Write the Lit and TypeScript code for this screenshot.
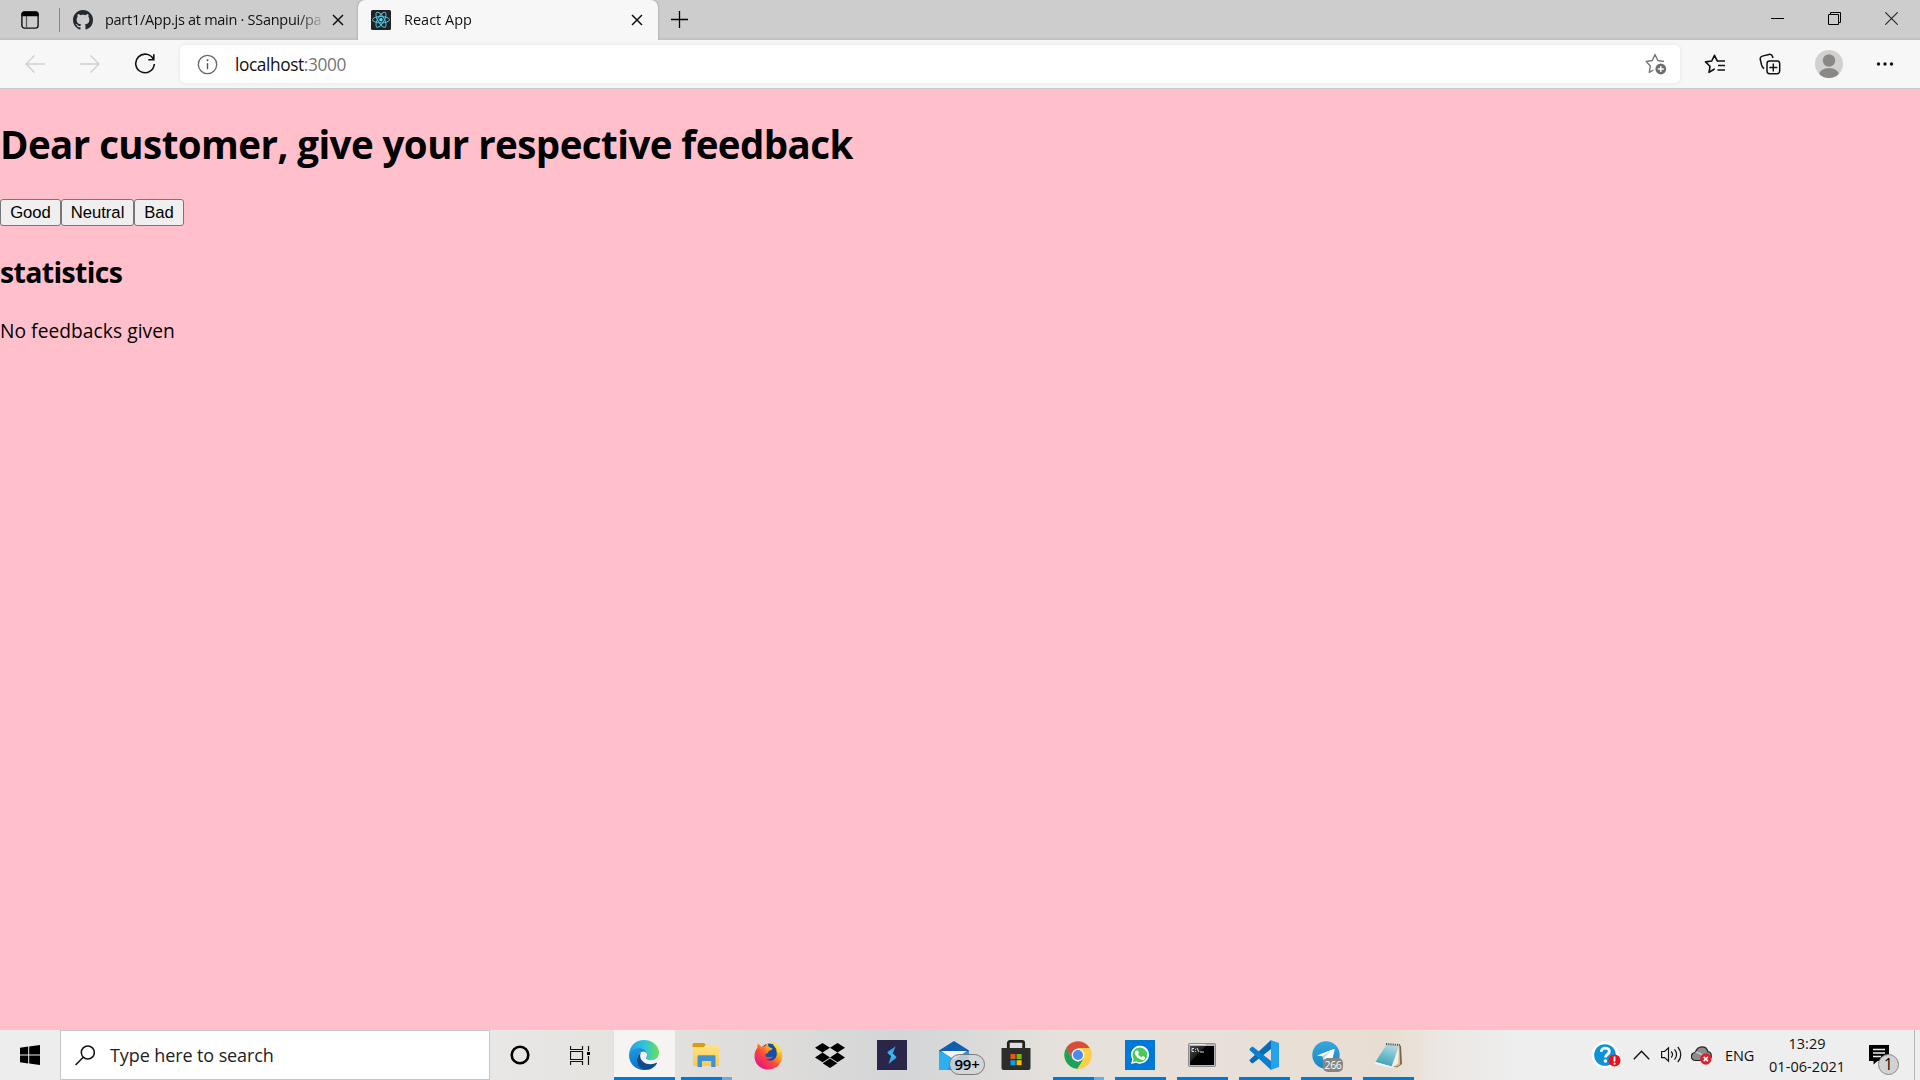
import { LitElement, html, css, svg } from "lit";
import type { TemplateResult } from "lit";
import { customElement, property, state } from "lit/decorators.js";
import { classMap } from "lit/directives/class-map.js";

const icon = (w: number, h: number, body: TemplateResult) =>
  html`<svg width=${w} height=${h} viewBox="0 0 ${w} ${h}" fill="none" style="display:block;flex:none">${body}</svg>`;

const closeIcon = icon(12, 12, svg`<path d="M1 1L11 11M11 1L1 11" stroke="#111" stroke-width="1.5"/>`);

const githubIcon = html`<svg width="20" height="20" viewBox="0 0 16 16" fill="#24292e" style="display:block;flex:none"><path d="M8 0C3.58 0 0 3.58 0 8c0 3.54 2.29 6.53 5.47 7.59.4.07.55-.17.55-.38 0-.19-.01-.82-.01-1.49-2.01.37-2.53-.49-2.69-.94-.09-.23-.48-.94-.82-1.13-.28-.15-.68-.52-.01-.53.63-.01 1.08.58 1.23.82.72 1.21 1.87.87 2.33.66.07-.52.28-.87.51-1.07-1.78-.2-3.64-.89-3.64-3.95 0-.87.31-1.59.82-2.15-.08-.2-.36-1.02.08-2.12 0 0 .67-.21 2.2.82.64-.18 1.32-.27 2-.27s1.36.09 2 .27c1.53-1.04 2.2-.82 2.2-.82.44 1.1.16 1.92.08 2.12.51.56.82 1.27.82 2.15 0 3.07-1.87 3.75-3.65 3.95.29.25.54.73.54 1.48 0 1.07-.01 1.93-.01 2.2 0 .21.15.46.55.38A8.01 8.01 0 0 0 16 8c0-4.42-3.58-8-8-8z"/></svg>`;

const reactIcon = icon(20, 20, svg`
  <rect width="20" height="20" rx="1.5" fill="#222"/>
  <g stroke="#53c1de" stroke-width="1">
    <ellipse cx="10" cy="9.7" rx="8.5" ry="3.2"/>
    <ellipse cx="10" cy="9.7" rx="8.5" ry="3.2" transform="rotate(60 10 9.7)"/>
    <ellipse cx="10" cy="9.7" rx="8.5" ry="3.2" transform="rotate(120 10 9.7)"/>
  </g>
  <circle cx="10" cy="9.7" r="1.7" fill="#61dafb"/>`);

const tabActionsIcon = icon(18, 18, svg`
  <rect x="0.9" y="0.9" width="16.2" height="16.2" rx="2.6" stroke="#111" stroke-width="1.4"/>
  <path d="M.5 5.2V3A2.5 2.5 0 0 1 3 .5h12A2.5 2.5 0 0 1 17.5 3v2.2z" fill="#000"/>
  <path d="M5.5 5v12" stroke="#555" stroke-width="1.2"/>`);

const starPath = "M10.2 15.2L5 18.3 6 12.3 1.5 7.9 7.7 7 10.5 1.3 13.2 6.8";

@customElement("browser-tab")
class BrowserTab extends LitElement {
  @property() label = "";
  @property({ type: Boolean, reflect: true }) active = false;
  @property({ attribute: false }) favicon: TemplateResult | null = null;

  static styles = css`
    :host {
      display: flex;
      align-items: center;
      height: 40px;
      width: 298px;
      box-sizing: border-box;
      padding: 0 14px 0 13px;
      color: #111;
      font: 14.5px "Open Sans", "Noto Sans", sans-serif;
    }
    :host([active]) {
      width: 300px;
      background: #f7f7f7;
      border-radius: 7px 7px 0 0;
      box-shadow: 0 0 2px rgba(0, 0, 0, 0.35);
      padding-right: 15px;
    }
    .label {
      flex: 1;
      min-width: 0;
      margin: 0 10px 0 12px;
      overflow: hidden;
      white-space: nowrap;
      line-height: 40px;
      letter-spacing: -0.28px;
      -webkit-mask-image: linear-gradient(to right, #000 calc(100% - 24px), transparent calc(100% + 4px));
      mask-image: linear-gradient(to right, #000 calc(100% - 24px), transparent calc(100% + 4px));
    }
    :host([active]) .label {
      margin-left: 13px;
      letter-spacing: 0;
    }
  `;

  render() {
    return html`${this.favicon}<span class="label">${this.label}</span>${closeIcon}`;
  }
}

@customElement("browser-chrome")
class BrowserChrome extends LitElement {
  static styles = css`
    :host {
      display: flex;
      flex-direction: column;
      font-family: "Open Sans", "Noto Sans", sans-serif;
    }
    .strip {
      display: flex;
      align-items: center;
      height: 40px;
      background: linear-gradient(#cdcdcd 37px, #bdbdbd);
    }
    .actions {
      display: flex;
      align-items: center;
      width: 60px;
      height: 24px;
      box-sizing: border-box;
      padding-left: 21px;
      border-right: 1px solid #888;
    }
    .plus {
      padding: 0 0 1px 13px;
      flex: 1;
    }
    .window {
      display: flex;
      gap: 44px;
      padding: 0 22px 3px 0;
    }
    .toolbar {
      display: flex;
      align-items: center;
      height: 49px;
      box-sizing: border-box;
      background: #f7f7f7;
      padding: 0 26px 0 24px;
      border-bottom: 1px solid #ccc;
    }
    .nav {
      display: flex;
      align-items: center;
      width: 156px;
      gap: 33px;
    }
    .address {
      display: flex;
      align-items: center;
      width: 1500px;
      height: 38px;
      box-sizing: border-box;
      padding: 0 13px 0 17px;
      background: #fff;
      border-radius: 5px;
      box-shadow: 0 0 4px rgba(0, 0, 0, 0.09);
    }
    .url {
      flex: 1;
      padding-left: 17px;
      font-size: 17.3px;
      letter-spacing: -0.4px;
      color: #111;
      white-space: nowrap;
    }
    .port {
      color: #767676;
    }
    .tools {
      display: flex;
      align-items: center;
      flex: 1;
      justify-content: space-between;
      padding-left: 24px;
    }
  `;

  render() {
    return html`
      <div class="strip">
        <div class="actions">${tabActionsIcon}</div>
        <browser-tab .favicon=${githubIcon} label="part1/App.js at main · SSanpui/pa"></browser-tab>
        <browser-tab active .favicon=${reactIcon} label="React App"></browser-tab>
        <div class="plus">${icon(17, 17, svg`<path d="M8.5 0v17M0 8.5h17" stroke="#000" stroke-width="1.3"/>`)}</div>
        <div class="window">
          ${icon(13, 13, svg`<path d="M0 6.5h13" stroke="#000"/>`)}
          ${icon(13, 13, svg`<path d="M.5 2.5h10v10H.5zM2.5 2.5v-2h10v10h-2" stroke="#000"/>`)}
          ${icon(13, 13, svg`<path d="M.3.3l12.4 12.4M12.7.3L.3 12.7" stroke="#222" stroke-width="1.1"/>`)}
        </div>
      </div>
      <div class="toolbar">
        <div class="nav">
          ${icon(22, 20, svg`<path d="M21 10H2M10.5 1.5L2 10l8.5 8.5" stroke="#cfcfcf" stroke-width="1.4"/>`)}
          ${icon(22, 20, svg`<path d="M1 10h19M11.5 1.5L20 10l-8.5 8.5" stroke="#cfcfcf" stroke-width="1.4"/>`)}
          ${icon(22, 22, svg`<path d="M19.5 6.6A9.3 9.3 0 1 0 20.3 11M19.8 1.3v5.5h-5.5" stroke="#111" stroke-width="1.6"/>`)}
        </div>
        <div class="address">
          ${icon(21, 21, svg`<circle cx="10.5" cy="10.5" r="9.2" stroke="#666" stroke-width="1.3"/><path d="M10.5 9.2v6" stroke="#555" stroke-width="1.4"/><circle cx="10.5" cy="6.2" r="1" fill="#555"/>`)}
          <div class="url">localhost<span class="port">:3000</span></div>
          ${icon(22, 22, svg`
            <path d="M8.5 17L4.3 19.3 5.3 12.9 1.2 8.5 7.3 7.5 10 1.5 12.8 7.5 19 8.5" stroke="#777" stroke-width="1.4" stroke-linejoin="round"/>
            <circle cx="15.8" cy="16" r="5.4" fill="#6e6e6e"/><path d="M15.8 13v6M12.8 16h6" stroke="#fff" stroke-width="1.4"/>`)}
        </div>
        <div class="tools">
          ${icon(22, 21, svg`<path d=${starPath} stroke="#111" stroke-width="1.6" stroke-linejoin="round" stroke-linecap="round"/><path d="M13 7h8M14 11.5h7M13.5 16h7.5" stroke="#111" stroke-width="1.5"/>`)}
          ${icon(22, 22, svg`
            <rect x="8" y="8" width="12.7" height="12.7" rx="2.6" stroke="#111" stroke-width="1.5"/>
            <path d="M14.3 10.5v8M10.3 14.5h8" stroke="#111" stroke-width="1.4"/>
            <path d="M5.2 15.5C3.5 14.8 3 13.5 2.6 12L1.3 6.5C.9 4.8 1.6 3.6 3.3 3.1L10 1.4c1.9-.4 2.9.3 3.5 2l.4 1.6" stroke="#111" stroke-width="1.5"/>`)}
          <svg width="28" height="28" viewBox="0 0 28 28">
            <defs><clipPath id="face"><circle cx="14" cy="14" r="14"/></clipPath></defs>
            <g clip-path="url(#face)"><rect width="28" height="28" fill="#d2d0ce"/><circle cx="14" cy="10.5" r="6.2" fill="#8a8886"/><ellipse cx="14" cy="25" rx="10" ry="7" fill="#8a8886"/></g>
          </svg>
          ${icon(18, 6, svg`<g fill="#111"><circle cx="2.5" cy="3" r="1.7"/><circle cx="9" cy="3" r="1.7"/><circle cx="15.5" cy="3" r="1.7"/></g>`)}
        </div>
      </div>
    `;
  }
}

@customElement("feedback-page")
class FeedbackPage extends LitElement {
  @state() private good = 0;
  @state() private neutral = 0;
  @state() private bad = 0;

  static styles = css`
    :host {
      display: block;
      background: #ffc0cb;
      color: #000;
      font: 19.2px/27px "Open Sans", "Noto Sans", sans-serif;
      overflow: hidden;
    }
    h1 {
      margin: 29px 0 28px;
      font-size: 38.5px;
      line-height: 53px;
      letter-spacing: -0.57px;
      white-space: nowrap;
    }
    .buttons {
      display: flex;
    }
    button {
      height: 27px;
      box-sizing: border-box;
      border: 1px solid #767676;
      border-radius: 3px;
      background: #efefef;
      color: #000;
      padding: 0;
      font: 16.67px "Liberation Sans", Arial, sans-serif;
    }
    .good { width: 61px; }
    .neutral { width: 73px; }
    .bad { width: 50px; }
    h2 {
      margin: 26px 0 25px;
      font-size: 28.5px;
      line-height: 40px;
      letter-spacing: -0.65px;
    }
    p {
      margin: 0;
      letter-spacing: 0.05px;
    }
  `;

  render() {
    const total = this.good + this.neutral + this.bad;
    return html`
      <h1>Dear customer, give your respective feedback</h1>
      <div class="buttons">
        <button class="good" @click=${() => this.good++}>Good</button>
        <button class="neutral" @click=${() => this.neutral++}>Neutral</button>
        <button class="bad" @click=${() => this.bad++}>Bad</button>
      </div>
      <h2>statistics</h2>
      ${total === 0
        ? html`<p>No feedbacks given</p>`
        : html`<p>good ${this.good}</p><p>neutral ${this.neutral}</p><p>bad ${this.bad}</p>`}
    `;
  }
}

const edge = icon(30, 30, svg`
  <defs>
    <linearGradient id="e1" x1="0" y1="8" x2="30" y2="8" gradientUnits="userSpaceOnUse"><stop offset="0.1" stop-color="#2aa5e4"/><stop offset=".5" stop-color="#2fc2df"/><stop offset="1" stop-color="#6be05a"/></linearGradient>
    <linearGradient id="e2" x1="0" y1="8" x2="10" y2="30" gradientUnits="userSpaceOnUse"><stop stop-color="#1b9de2"/><stop offset="1" stop-color="#0d6fca"/></linearGradient>
  </defs>
  <path d="M0 14.5C.3 6 6.8 0 15 0c9 0 15 6.3 15 12.5 0 5-3.8 7.7-8 7.7-3.6 0-5.2-1.2-5.2-2.2 0-.8 1.2-1.3 1.2-3.6C18 11 14.5 9 10.5 9 5 9 1 12 0 14.5z" fill="url(#e1)"/>
  <path d="M0 15C.8 10.5 5.5 8.3 10 8.3c4.6 0 8 2.7 8 6.1-.5-2-2-2.9-3.6-2.9-2.8 0-6.2 3.3-6.2 8 0 5 3.8 9.8 10.3 10.2-1.1.2-2.2.3-3.5.3C6.5 30 0 23.5 0 15z" fill="url(#e2)"/>
  <path d="M12.4 12.2c-1 1-1.2 2.6-1.2 3.8 0 4.5 4.5 8.3 10 8.3 2.9 0 4.8-.8 6-1.5.5-.3 1 .2.7.7-2.5 4.1-6.5 6.3-10.6 6.3-5.4 0-9.3-4.5-9.3-9.9 0-3.7 2-6.4 4.4-7.7z" fill="#114a8b"/>`);

const explorer = icon(28, 26, svg`
  <defs><linearGradient id="x1" x1="0" y1="4" x2="0" y2="24" gradientUnits="userSpaceOnUse"><stop stop-color="#ffe083"/><stop offset="1" stop-color="#fcc950"/></linearGradient></defs>
  <path d="M1 3h26v21H1z" fill="url(#x1)"/>
  <path d="M.5 2.500a1.500 1.500 0 0 1 1.500-1.500h10l1.700 1.500-1.700 2.600H.5z" fill="#dd9b12"/>
  <path d="M5.5 25V14.5a1.2 1.2 0 0 1 1.2-1.2h15.6a1.2 1.2 0 0 1 1.2 1.2V25h-4.300v-6H10v6z" fill="#3f93d5"/>`);

const firefox = icon(29, 29, svg`
  <defs><linearGradient id="f1" x1="26" y1="2" x2="5" y2="26" gradientUnits="userSpaceOnUse"><stop stop-color="#fff44f"/><stop offset=".35" stop-color="#ffa41d"/><stop offset=".6" stop-color="#ff4b37"/><stop offset="1" stop-color="#e31587"/></linearGradient></defs>
  <circle cx="15.500" cy="12.500" r="10" fill="#144fa8"/>
  <path d="M3.500 6.500C3.200 4.500 4 2.600 4 2.600 5.500 4 6.800 5.300 7.500 6c1-.7 2.600-.8 3.500-.5.7-1.800 2-3 3-3.500-.3 1.600.2 2.800.7 3.600.5 1 3.700 1.500 3.700 2 0 1.200-1.500 1.600-3 2.200-1.400.6-.6 2-2 2.500-1.500.6-2.400 1-1.800 2.500 1.200 2.500 5 1.600 7.200.5-1.300 2.300-4.500 3.300-7 2.800 3.700 3.300 9.200 1.400 10.700-3.100.8-2.600.1-5-1-6.500 2.200 1 3 2.500 3.200 3.500C25 7 20.500 5 18.500 1.500L18.200.7C22 2.500 25.500 5.500 27 8.500c4 8-1 20-13 20C6 28.500.5 22.500.5 15c0-3.500 1.300-6.500 3-8.500z" fill="url(#f1)"/>
  <path d="M18.200.5c.2 4.200 4.800 6.300 5.800 12l3.500-2C26.500 6.500 22 3.500 18.200.5z" fill="#ffdf34"/>`);

const dropbox = icon(30, 25, svg`<path d="M7.500 0L15 4.800 7.500 9.600 0 4.800zM22.500 0L30 4.800 22.500 9.600 15 4.800zM7.500 9.600l7.500 4.800-7.500 4.800L0 14.400zM22.500 9.600l7.500 4.800-7.500 4.800-7.500-4.800zM15 15.600l7.300 4.700L15 25l-7.300-4.700z" fill="#000"/>`);

const bolt = icon(30, 30, svg`
  <defs><linearGradient id="b1" x1="10" y1="6" x2="20" y2="24" gradientUnits="userSpaceOnUse"><stop stop-color="#3f7ff0"/><stop offset=".5" stop-color="#35c4f4"/><stop offset="1" stop-color="#2d8de5"/></linearGradient></defs>
  <rect width="30" height="30" fill="#29264a"/>
  <path d="M18.700 6.200L11 11.500c-.7.500-.7 1.400 0 2l3.200 2.500-2.700 8 7.300-5.700c.8-.6.800-1.400 0-2L15.500 13.600z" fill="url(#b1)"/>`);

const mail = icon(30, 29, svg`
  <path d="M15 0L30 9.500v3H0v-3z" fill="#0f5fae"/>
  <path d="M0 9.800L15 17l15-7.200V29H0z" fill="#1f9be6"/>
  <path d="M2 10h26l-13 8.500z" fill="#f5f5f5"/>
  <path d="M0 29V10l15 8.500L8 29z" fill="#2eb0f0"/>`);

const store = icon(30, 30, svg`
  <path d="M7.300 9V3a1.600 1.600 0 0 1 1.600-1.600h12.200A1.600 1.600 0 0 1 22.700 3v6" stroke="#222" stroke-width="2.800"/>
  <path d="M.5 8h29v20a2 2 0 0 1-2 2h-25a2 2 0 0 1-2-2z" fill="#2d2d2d"/>
  <path d="M9.500 14h5v5h-5z" fill="#f25022"/><path d="M15.600 14h5v5h-5z" fill="#7fba00"/><path d="M9.500 20.200h5v5h-5z" fill="#00a4ef"/><path d="M15.600 20.200h5v5h-5z" fill="#ffb900"/>`);

const chrome = icon(28, 28, svg`
  <circle cx="14" cy="14" r="13.700" fill="#fccf47"/>
  <path d="M2.200 7A13.700 13.700 0 0 1 25.900 7.300H14L8.200 17.400z" fill="#da4a3d"/>
  <path d="M2.200 7A13.700 13.700 0 0 0 13.500 27.700L19.800 17.500 14 20.700 8.200 17.400z" fill="#1ba160"/>
  <path d="M25.900 7.300H14l6 10.100-6.500 10.300A13.700 13.700 0 0 0 25.900 7.300z" fill="#fccf47"/>
  <circle cx="14" cy="14" r="6.400" fill="#f4f4f4"/><circle cx="14" cy="14" r="5" fill="#4a8af4"/>`);

const whatsapp = icon(30, 30, svg`
  <rect width="30" height="30" fill="#0078d7"/>
  <path d="M6 24l1.300-4.700A9 9 0 1 1 11 22.700z" fill="#fff"/>
  <path d="M7.800 22.200l.9-3.200A7.400 7.400 0 1 1 11.200 21.300z" fill="#4ac959"/>
  <path d="M12.300 10.500c.5 0 .7.100.9.600l.7 1.600c.1.400-.7 1.200-.8 1.500.8 1.500 2 2.400 3.500 3.100.4 0 1-1.300 1.400-1.200l2 1c.3.200.2 1.200-.2 1.800-.7.900-2 1.200-3.100.9-3.500-1-5.800-3.300-6.800-6.100-.4-1.300.3-3.200 2.400-3.200z" fill="#fff"/>`);

const terminal = icon(28, 24, svg`
  <defs><linearGradient id="t1" x1="0" y1="2" x2="20" y2="22" gradientUnits="userSpaceOnUse"><stop stop-color="#555"/><stop offset=".45" stop-color="#222"/><stop offset=".5" stop-color="#000"/></linearGradient></defs>
  <rect x=".5" y=".5" width="27" height="23" rx="1" fill="#b4b6ba" stroke="#8b8d92"/>
  <path d="M2 3h24v19H2z" fill="url(#t1)"/><path d="M2 1.500h16" stroke="#e8e8ee"/>
  <path d="M6 5.500H4v3h2M7.500 6v.8M7.500 8v.8M9 5l2 4M12 9h4" stroke="#ddd" stroke-width="1"/>`);

const vscode = icon(30, 30, svg`
  <path d="M22 0l-1 1L1 19.500c-.7.600-.7 1.300 0 2l1.700 1.500c.5.500 1 .5 1.600 0L22 9z" fill="#0a6cb5"/>
  <path d="M22 30l-1-1L1 10.500c-.7-.6-.7-1.300 0-2L2.700 7c.5-.5 1-.5 1.600 0L22 21z" fill="#0a7fcf"/>
  <path d="M21.500 0L30 3v24l-8.500 3c-1 0 .5-.5.5-2V2c0-1.500-1.500-2-.5-2z" fill="#24a2ee"/>`);

const telegram = icon(28, 28, svg`
  <defs><linearGradient id="g1" x1="0" y1="0" x2="0" y2="28" gradientUnits="userSpaceOnUse"><stop stop-color="#35a6de"/><stop offset="1" stop-color="#1c87bf"/></linearGradient></defs>
  <circle cx="14" cy="14" r="13.700" fill="url(#g1)"/>
  <path d="M5 14.500L21.500 8c.8-.2 1.300.2 1.100 1.100l-2.800 11.500c-.2.700-.7.900-1.300.5l-4-3-2.300 2.200-1.800-5z" fill="#fff"/>
  <path d="M10.400 15.300l8.200-5-6 6.300-.4 3.500z" fill="#b8d3e4"/>`);

const notepad = icon(29, 27, svg`
  <defs><linearGradient id="n1" x1="16" y1="2" x2="9" y2="25" gradientUnits="userSpaceOnUse"><stop stop-color="#b4dbe2"/><stop offset=".5" stop-color="#6fbcca"/><stop offset="1" stop-color="#3e9fb3"/></linearGradient></defs>
  <path d="M25 3l2 1 1 18-5 3.500-3-1z" fill="#7c6341"/>
  <path d="M25.500 3l.7 19.500-4 2.500-3-2z" fill="#d9b98a"/>
  <path d="M25 3.500l-.8 18-6.200 4z" fill="#eef2f3"/>
  <path d="M12.500 2.500L25 3.300 17.500 24.500 1.500 20z" fill="url(#n1)"/>
  <path d="M1.500 20l16 4.500.4 1.300L1 22z" fill="#f2f6f6"/>
  <path d="M12 2l14 1" stroke="#555" stroke-width="2" stroke-dasharray="1.2 1"/>`);

interface TaskItem {
  name: string;
  art: TemplateResult;
  run?: boolean;
  focus?: boolean;
  stack?: boolean;
  badge?: string;
  badgeStyle?: string;
}

const tasks: TaskItem[] = [
  { name: "edge", art: edge, run: true, focus: true },
  { name: "explorer", art: explorer, run: true, stack: true },
  { name: "firefox", art: firefox },
  { name: "dropbox", art: dropbox },
  { name: "bolt", art: bolt },
  { name: "mail", art: mail, badge: "99+", badgeStyle: "pill" },
  { name: "store", art: store },
  { name: "chrome", art: chrome, run: true, stack: true },
  { name: "whatsapp", art: whatsapp, run: true },
  { name: "terminal", art: terminal, run: true },
  { name: "vscode", art: vscode, run: true },
  { name: "telegram", art: telegram, run: true, badge: "266", badgeStyle: "tag" },
  { name: "notepad", art: notepad, run: true },
];

@customElement("task-bar")
class TaskBar extends LitElement {
  static styles = css`
    :host {
      display: flex;
      height: 50px;
      color: #111;
      font-family: "Open Sans", "Noto Sans", sans-serif;
      background: linear-gradient(to right, #ededed 0, #ebebea 380px, #e5e3e0 620px, #dddcda 780px, #d4d5d7 900px, #d9d9d9 960px, #e6e1dc 1060px, #e8e0d8 1250px, #e8ddd1 1390px, #ebe7e3 1440px, #eee 1520px);
    }
    .start, .cell {
      display: flex;
      align-items: center;
      justify-content: center;
      flex: none;
      width: 60px;
    }
    .search {
      display: flex;
      align-items: center;
      width: 430px;
      box-sizing: border-box;
      border: 1px solid #c4c6c8;
      background: #fff;
      padding-left: 14px;
      gap: 15px;
      font-size: 18px;
      color: #222;
    }
    .search span { letter-spacing: -0.1px; }
    .tasks {
      display: flex;
      padding-left: 4px;
      width: 806px;
      flex: none;
    }
    .task {
      position: relative;
      display: flex;
      flex: none;
      align-items: center;
      justify-content: center;
      width: 62px;
      box-sizing: border-box;
      padding-right: 2px;
    }
    .focus { background: linear-gradient(to right, #f5f4f2 61px, transparent 61px); }
    .line {
      position: absolute;
      left: 5px;
      bottom: 0;
      width: 51px;
      height: 3px;
      background: #0078d7;
    }
    .focus .line { left: 0; width: 61px; }
    .stack .line { background: linear-gradient(to right, #0078d7 41px, #66aee7 41px); }
    .badge {
      position: absolute;
      box-sizing: border-box;
      text-align: center;
      white-space: nowrap;
    }
    .pill {
      left: 25px;
      top: 24px;
      width: 36px;
      height: 21px;
      border: 1px solid #777;
      border-radius: 11px;
      background: rgba(212, 213, 215, 0.85);
      font-size: 15px;
      font-weight: 600;
      line-height: 19px;
      letter-spacing: -0.3px;
      color: #000;
    }
    .tag {
      left: 27px;
      top: 28px;
      width: 20px;
      height: 14px;
      border-radius: 5px;
      background: #858585;
      color: #fff;
      font-size: 10.5px;
      line-height: 14px;
      letter-spacing: -0.4px;
    }
    .tray {
      display: flex;
      align-items: center;
      flex: 1;
      justify-content: flex-end;
    }
    .help { margin-right: 12px; }
    .up { margin-right: 11px; }
    .sound { margin-right: 9px; }
    .cloud { margin-right: 13px; }
    .lang { font-size: 14.5px; width: 29px; letter-spacing: -0.1px; }
    .clock {
      width: 76px;
      margin: 0 24px 0 15px;
      text-align: center;
      white-space: nowrap;
      font-size: 14.5px;
      line-height: 23px;
      letter-spacing: 0.05px;
    }
    .note {
      position: relative;
      width: 20px;
      height: 20px;
      margin-right: 25px;
    }
    .count {
      position: absolute;
      left: 9px;
      top: 9px;
      width: 21px;
      height: 21px;
      box-sizing: border-box;
      border: 1px solid #888;
      border-radius: 50%;
      background: #d2d2d2;
      text-align: center;
      font-size: 15.5px;
      line-height: 19px;
      color: #000;
    }
    .peek {
      width: 5px;
      height: 50px;
      border-left: 1px solid #b5b5b5;
    }
  `;

  private renderTask(t: TaskItem) {
    return html`<div class=${classMap({ task: true, focus: !!t.focus, stack: !!t.stack })}>
      ${t.art}
      ${t.badge ? html`<span class="badge ${t.badgeStyle}">${t.badge}</span>` : null}
      ${t.run ? html`<i class="line"></i>` : null}
    </div>`;
  }

  render() {
    return html`
      <div class="start">${icon(20, 20, svg`<path d="M0 2.800L8.200 1.600V9.500H0zM9.200 1.500L20 0v9.500H9.200zM0 10.500h8.200v8L0 17.300zM9.200 10.500H20V20L9.200 18.600z" fill="#000"/>`)}</div>
      <div class="search">
        ${icon(20, 21, svg`<circle cx="12.800" cy="7.500" r="6.500" stroke="#111" stroke-width="1.500"/><path d="M8.200 12.200L.6 20" stroke="#111" stroke-width="1.500"/>`)}
        <span>Type here to search</span>
      </div>
      <div class="cell">${icon(20, 20, svg`<circle cx="10" cy="10" r="8.300" stroke="#000" stroke-width="2.600"/>`)}</div>
      <div class="cell">${icon(20, 19, svg`<path d="M.5 0v3.500h12V0M.5 19v-3.500h12V19M.5 5.500h12v8H.5zM18.500 0v5M18.500 10v9" stroke="#111" stroke-width="1.200"/><path d="M17 6h3v3h-3z" fill="#000"/>`)}</div>
      <div class="tasks">${tasks.map((t) => this.renderTask(t))}</div>
      <div class="tray">
        <div class="help">${icon(30, 28, svg`
          <circle cx="14" cy="14" r="13.500" fill="#fff"/><circle cx="14" cy="14" r="10.800" fill="#0a94d6"/>
          <path d="M10.300 10.800c0-5 8-4.800 8-.3 0 3-3.800 2.700-3.800 6" stroke="#fff" stroke-width="2.800"/><circle cx="14.400" cy="20" r="1.800" fill="#fff"/>
          <circle cx="23.500" cy="19.500" r="6" fill="#e8121c"/><path d="M23.500 15.500v5" stroke="#fff" stroke-width="1.800"/><circle cx="23.500" cy="22.700" r="1.100" fill="#fff"/>`)}</div>
        <div class="up">${icon(17, 10, svg`<path d="M.8 9.200L8.500 1.300l7.700 7.900" stroke="#111" stroke-width="1.400"/>`)}</div>
        <div class="sound">${icon(21, 18, svg`<path d="M.6 5.500h3L7.500 1.800v13.400L3.600 11.600h-3z" stroke="#111" stroke-width="1.200"/><path d="M10.200 5.500c1.600 1.800 1.600 4.200 0 6M13.500 3.300c2.700 3 2.700 7.400 0 10.400M16.800 1c4 4.500 4 10.500 0 15" stroke="#111" stroke-width="1.200"/>`)}</div>
        <div class="cloud">${icon(21, 19, svg`
          <path d="M4.500 14.500a4 4 0 0 1-.3-8C5.500 2.500 8 .8 11 .8c3.400 0 5.300 2.200 5.800 4.800 2 .2 3.500 2 3.500 4.300 0 2.700-1.800 4.600-4 4.600z" fill="#8c8c8c" stroke="#222" stroke-width="1.200"/>
          <path d="M4.500 6.500c3-.6 5.500 1 10 5" stroke="#c8c8c8" stroke-width="1.500"/>
          <circle cx="14.800" cy="13" r="5.700" fill="#d8232f"/><path d="M12.700 10.900l4.200 4.200M16.900 10.900l-4.200 4.200" stroke="#fff" stroke-width="1.500"/>`)}</div>
        <div class="lang">ENG</div>
        <div class="clock"><div>13:29</div><div>01-06-2021</div></div>
        <div class="note">${icon(20, 20, svg`<path d="M0 0h20v16H8.500L4.500 19.500V16H0z" fill="#000"/><path d="M4 4.500h12M4 8h12M4 11.500h8" stroke="#eee" stroke-width="1.300"/>`)}<span class="count">1</span></div>
        <div class="peek"></div>
      </div>
    `;
  }
}

@customElement("app-root")
class AppRoot extends LitElement {
  static styles = css`
    :host {
      display: flex;
      flex-direction: column;
      width: 1920px;
      height: 1080px;
      overflow: hidden;
    }
    browser-chrome { flex: none; height: 89px; }
    feedback-page { flex: 1; }
    task-bar { flex: none; }
  `;

  render() {
    return html`<browser-chrome></browser-chrome><feedback-page></feedback-page><task-bar></task-bar>`;
  }
}
